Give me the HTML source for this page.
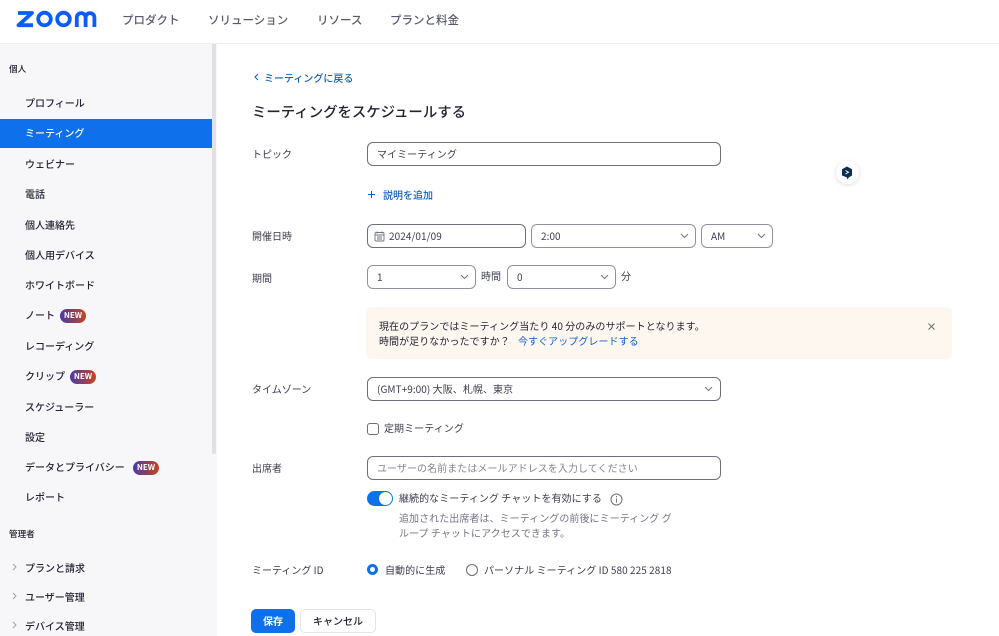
<!DOCTYPE html>
<html lang="ja"><head><meta charset="utf-8"><title>Zoom</title>
<style>
html,body{margin:0;padding:0;width:999px;height:636px;overflow:hidden;background:#fff}
body{font-family:"Noto Sans CJK JP","Liberation Sans",sans-serif;position:relative;color:#232333}
.a{position:absolute;white-space:nowrap;line-height:16px}
.nav{font-size:11.5px;color:#5a5a6e;top:12px;font-weight:500}
.s{left:25px;font-size:10px;color:#232333;font-weight:500;margin-top:0}
.h{left:9px;font-size:8.57px;color:#232333;font-weight:500}
.l{left:252px;font-size:10px;color:#3c3c4c}
.t{font-size:10px;color:#3c3c4c;letter-spacing:.06px}
.box{position:absolute;box-sizing:border-box;height:24px;border:1px solid #91919b;border-radius:6px;background:#fff;font-size:10px;line-height:22px;color:#3c3c4c;padding-left:9px;white-space:nowrap;letter-spacing:.06px}
.box svg{position:absolute;top:8px}
.new{position:absolute;width:26px;height:14px;border-radius:7px;background:linear-gradient(90deg,#4a3aa8,#c8451c);color:#fff;font-size:8px;font-weight:700;line-height:14px;text-align:center}
.chev{position:absolute;left:12px}
</style></head><body>
<svg class="a" style="left:15px;top:9px" width="84" height="20" viewBox="15 9 84 20" fill="none" stroke="#0b5cff" stroke-width="3.800">
<path d="M18 13h14L18.500 25.200h14.500" stroke-linejoin="round"/>
<circle cx="44.500" cy="19" r="6.300"/><circle cx="63.500" cy="19" r="6.300"/>
<path d="M76.800 27v-9.500a4.400 4.400 0 0 1 8.800 0V27M85.600 17.500a4.400 4.400 0 0 1 8.800 0V27"/>
</svg>
<div class="a nav" style="left:122px">プロダクト</div>
<div class="a nav" style="left:208px">ソリューション</div>
<div class="a nav" style="left:317px">リソース</div>
<div class="a nav" style="left:390px">プランと料金</div>
<div class="a" style="left:0;top:43px;width:999px;height:1px;background:#ededf0;line-height:1px"></div>

<div class="a" style="left:0;top:44px;width:212px;height:592px;background:#f7f7fa"></div>
<div class="a" style="left:212px;top:44px;width:5px;height:592px;background:#f7f7fa"></div>
<div class="a" style="left:212px;top:44px;width:4px;height:410px;background:#e1e1e4;border-radius:0 0 2px 2px"></div>
<div class="a" style="left:0;top:119px;width:212px;height:29px;background:#0e71eb"></div>

<div class="a h" style="top:61px">個人</div>
<div class="a s" style="top:95px">プロフィール</div>
<div class="a s" style="top:125px;color:#fff">ミーティング</div>
<div class="a s" style="top:156px">ウェビナー</div>
<div class="a s" style="top:186px">電話</div>
<div class="a s" style="top:217px">個人連絡先</div>
<div class="a s" style="top:247px">個人用デバイス</div>
<div class="a s" style="top:277px">ホワイトボード</div>
<div class="a s" style="top:307px">ノート</div><div class="new" style="left:60px;top:309px">NEW</div>
<div class="a s" style="top:338px">レコーディング</div>
<div class="a s" style="top:368px">クリップ</div><div class="new" style="left:70px;top:370px">NEW</div>
<div class="a s" style="top:399px">スケジューラー</div>
<div class="a s" style="top:429px">設定</div>
<div class="a s" style="top:459px">データとプライバシー</div><div class="new" style="left:133px;top:461px">NEW</div>
<div class="a s" style="top:489px">レポート</div>
<div class="a h" style="top:526px">管理者</div>
<svg class="chev" style="top:563px" width="5" height="8" fill="none" stroke="#a0a0aa"><path d="M1 1l3 3-3 3"/></svg>
<div class="a s" style="top:560px">プランと請求</div>
<svg class="chev" style="top:592px" width="5" height="8" fill="none" stroke="#a0a0aa"><path d="M1 1l3 3-3 3"/></svg>
<div class="a s" style="top:589px">ユーザー管理</div>
<svg class="chev" style="top:621px" width="5" height="8" fill="none" stroke="#a0a0aa"><path d="M1 1l3 3-3 3"/></svg>
<div class="a s" style="top:618px">デバイス管理</div>

<svg class="a" style="left:254px;top:73px" width="5" height="8" fill="none" stroke="#0e5fb8"><path d="M4 1L1 4l3 3"/></svg>
<div class="a" style="left:264px;top:70px;font-size:10px;color:#0e5fb8;font-weight:500">ミーティングに戻る</div>
<div class="a" style="left:252px;top:102px;font-size:14.4px;line-height:20px;color:#232333;font-weight:500">ミーティングをスケジュールする</div>

<div class="a l" style="top:146px">トピック</div>
<div class="box" style="left:367px;top:142px;width:354px;border-color:#6e6e78">マイミーティング</div>
<svg class="a" style="left:368px;top:191px" width="7" height="7" fill="none" stroke="#0e5fb8"><path d="M3.500 0v7M0 3.500h7"/></svg>
<div class="a" style="left:383px;top:187px;font-size:10px;color:#0e5fb8;font-weight:500">説明を追加</div>

<div class="a l" style="top:228px">開催日時</div>
<div class="box" style="left:367px;top:224px;width:159px;padding-left:21px;border-color:#6e6e78"><svg style="left:6px;top:6px" width="11" height="11" fill="none" stroke="#6e7680" stroke-width=".9"><rect x="1" y="1.500" width="9" height="8.500" rx="1"/><path d="M1 4h9M3 .5v2M8 .5v2M3 6h5M3 8h5"/></svg>2024/01/09</div>
<div class="box" style="left:531px;top:224px;width:165px">2:00<svg style="right:6px" width="9" height="6" fill="none" stroke="#6e7680"><path d="M1 1l3.500 3.500L8 1"/></svg></div>
<div class="box" style="left:701px;top:224px;width:72px">AM<svg style="right:6px" width="9" height="6" fill="none" stroke="#6e7680"><path d="M1 1l3.500 3.500L8 1"/></svg></div>

<div class="a l" style="top:270px">期間</div>
<div class="box" style="left:367px;top:265px;width:109px">1<svg style="right:6px" width="9" height="6" fill="none" stroke="#6e7680"><path d="M1 1l3.500 3.500L8 1"/></svg></div>
<div class="a t" style="left:481px;top:268px">時間</div>
<div class="box" style="left:507px;top:265px;width:109px">0<svg style="right:6px" width="9" height="6" fill="none" stroke="#6e7680"><path d="M1 1l3.500 3.500L8 1"/></svg></div>
<div class="a t" style="left:621px;top:268px">分</div>

<div class="a" style="left:366px;top:307px;width:586px;height:52px;background:#fef7f0;border-radius:6px"></div>
<div class="a t" style="left:379px;top:318px;color:#232333">現在のプランではミーティング当たり 40 分のみのサポートとなります。</div>
<div class="a t" style="left:379px;top:333px;color:#232333">時間が足りなかったですか？</div>
<div class="a t" style="left:518px;top:333px;color:#0e5fd0">今すぐアップグレードする</div>
<svg class="a" style="left:928px;top:323px" width="7" height="7" fill="none" stroke="#6e6e78"><path d="M.5.5l6 6M6.500.5l-6 6"/></svg>

<div class="a l" style="top:381px">タイムゾーン</div>
<div class="box" style="left:367px;top:377px;width:354px;border-color:#6e6e78">(GMT+9:00) 大阪、札幌、東京<svg style="right:7px" width="9" height="6" fill="none" stroke="#6e7680"><path d="M1 1l3.500 3.500L8 1"/></svg></div>

<div class="a" style="left:367px;top:423px;width:10px;height:10px;border:1px solid #6e6e78;border-radius:3px;box-sizing:content-box"></div>
<div class="a t" style="left:384px;top:420px">定期ミーティング</div>

<div class="a l" style="top:460px">出席者</div>
<div class="box" style="left:367px;top:456px;width:354px;height:24px;color:#85858f;border-color:#6e6e78">ユーザーの名前またはメールアドレスを入力してください</div>

<div class="a" style="left:367px;top:491px;width:26px;height:15px;border-radius:8px;background:#0e71eb"></div>
<div class="a" style="left:379px;top:492px;width:13px;height:13px;border-radius:50%;background:#fff"></div>
<div class="a t" style="left:399px;top:490px">継続的なミーティング チャットを有効にする</div>
<svg class="a" style="left:610px;top:493px" width="13" height="13" fill="none" stroke="#6e6e78"><circle cx="6.500" cy="6.500" r="5.500"/><path d="M6.500 5.500v4M6.500 3v1.300"/></svg>
<div class="a t" style="left:399px;top:510px;color:#747487">追加された出席者は、ミーティングの前後にミーティング グ</div>
<div class="a t" style="left:399px;top:525px;color:#747487">ループ チャットにアクセスできます。</div>

<div class="a l" style="top:562px">ミーティング ID</div>
<div class="a" style="left:367px;top:564px;width:11px;height:11px;border-radius:50%;border:3px solid #0e71eb;box-sizing:border-box;background:#fff"></div>
<div class="a t" style="left:385px;top:562px">自動的に生成</div>
<div class="a" style="left:466px;top:564px;width:12px;height:12px;border-radius:50%;border:1px solid #6e6e78;box-sizing:border-box"></div>
<div class="a t" style="left:484px;top:562px">パーソナル ミーティング ID 580 225 2818</div>

<div class="a" style="left:251px;top:609px;width:44px;height:24px;background:#0e71eb;border-radius:5px;color:#fff;font-size:10px;font-weight:700;line-height:24px;text-align:center">保存</div>
<div class="a" style="left:300px;top:609px;width:76px;height:24px;box-sizing:border-box;background:#fff;border:1px solid #e4e4e8;border-radius:5px;color:#232333;font-size:10px;font-weight:500;line-height:22px;text-align:center">キャンセル</div>

<div class="a" style="left:836px;top:161px;width:23px;height:23px;border-radius:50%;background:#fff;box-shadow:0 1px 5px rgba(0,0,0,.14)"></div>
<svg class="a" style="left:841px;top:166px" width="12" height="14"><path d="M6 .5L11 3.300v6.200L8 11.200 6 13.500v-2L1 9.500V3.300z" fill="#0f2d4d"/><path d="M4.500 4.500L7.500 6.300 4.500 8" fill="none" stroke="#fff" stroke-width="1"/></svg>
</body></html>
